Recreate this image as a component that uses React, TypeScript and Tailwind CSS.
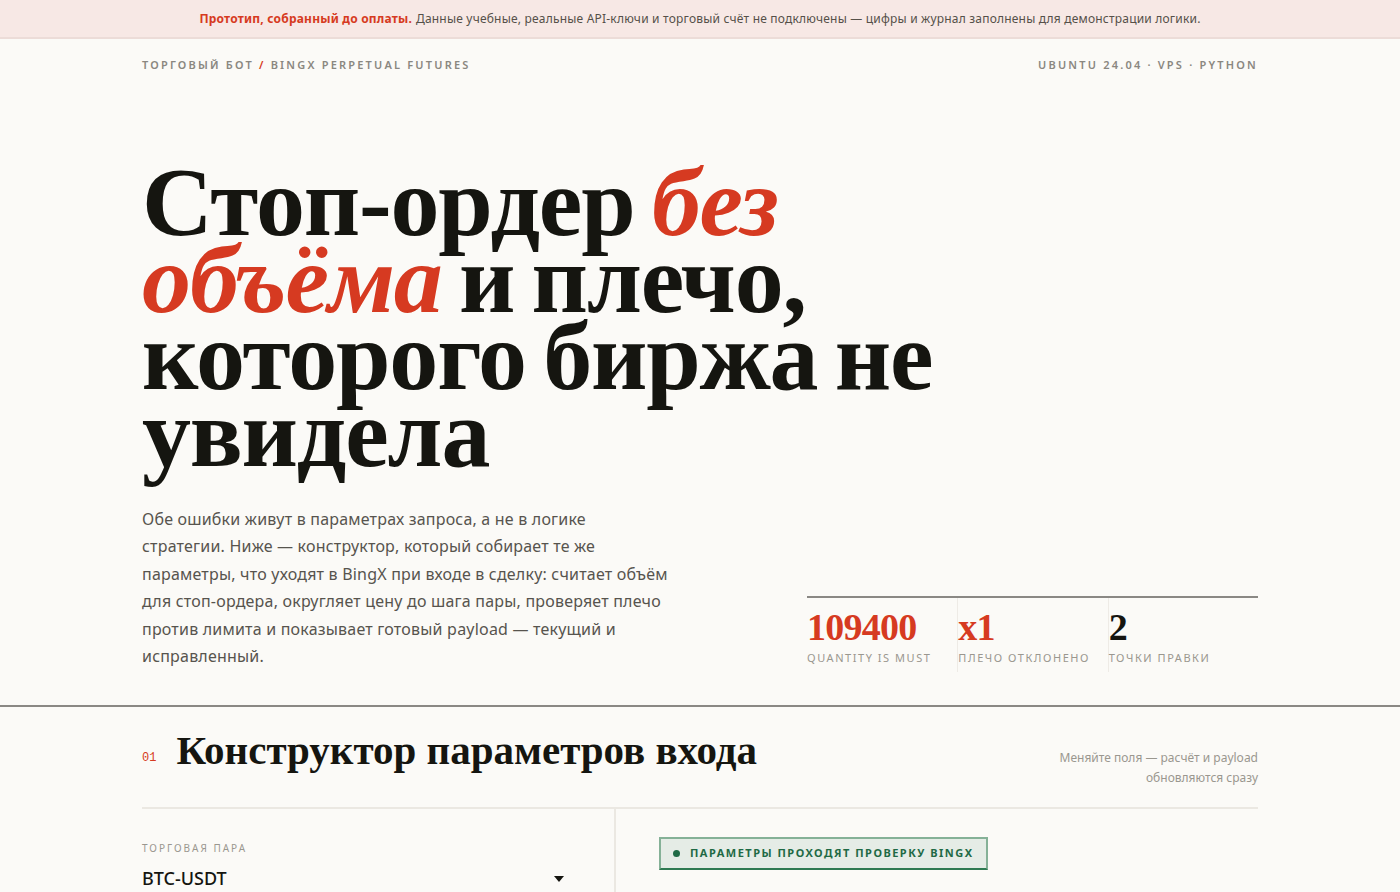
import React from "react";

const serif = "font-['Liberation_Serif','DejaVu_Serif',serif]";
const sans = "font-['Noto_Sans','Open_Sans',sans-serif]";
const mono = "font-['Liberation_Mono','DejaVu_Sans_Mono',monospace]";

const stats = [
  { value: "109400", label: "QUANTITY IS MUST", red: true },
  { value: "x1", label: "ПЛЕЧО ОТКЛОНЕНО", red: true },
  { value: "2", label: "ТОЧКИ ПРАВКИ", red: false },
];

export default function App() {
  return (
    <div className={`min-h-screen bg-[#fbfaf7] text-[#151510] ${sans}`}>
      {/* demo notice */}
      <div className="h-[39px] bg-[#f7e8e5] border-b-2 border-[#ecdcd8] flex items-center justify-center text-[12px] tracking-[0.2px] text-[#555049]">
        <span className="font-bold text-[#d63a21] mr-1">Прототип, собранный до оплаты.</span>
        Данные учебные, реальные API-ключи и торговый счёт не подключены — цифры и журнал заполнены для демонстрации логики.
      </div>

      <div className="mx-auto w-[1116px]">
        <div className="flex justify-between pt-[18px] text-[11px] font-semibold tracking-[0.2em] text-[#8a8780]">
          <span>
            ТОРГОВЫЙ БОТ <span className="text-[#d63a21]">/</span> BINGX PERPETUAL FUTURES
          </span>
          <span>UBUNTU 24.04 · VPS · PYTHON</span>
        </div>

        <h1 className={`${serif} mt-[90px] text-[98px] leading-[77px] font-bold tracking-[-0.012em] [word-spacing:-6px] w-[830px]`}>
          Стоп-ордер <em className="text-[#d63a21]">без объёма</em> и плечо, которого биржа не увидела
        </h1>

        <div className="flex justify-between items-end mt-[34px] pb-[34px]">
          <p className="w-[560px] text-[16px] leading-[27.6px] tracking-[0.2px] text-[#57544e]">
            Обе ошибки живут в параметрах запроса, а не в логике
            <br />
            стратегии. Ниже — конструктор, который собирает те же
            <br />
            параметры, что уходят в BingX при входе в сделку: считает объём
            <br />
            для стоп-ордера, округляет цену до шага пары, проверяет плечо
            <br />
            против лимита и показывает готовый payload — текущий и
            <br />
            исправленный.
          </p>
          <div className="w-[451px] border-t-2 border-[#8a8884] grid grid-cols-3 mb-[-1px]">
            {stats.map((s, i) => (
              <div
                key={s.label}
                className={`pt-[8px] pb-[6px] ${i > 0 ? "border-l border-[#eeebe6]" : ""}`}
              >
                <div
                  className={`${serif} text-[38px] leading-[42px] font-bold tracking-[-0.02em] ${s.red ? "text-[#d63a21]" : "text-[#151510]"}`}
                >
                  {s.value}
                </div>
                <div className="mt-[2px] text-[11px] tracking-[0.14em] text-[#9a978f]">{s.label}</div>
              </div>
            ))}
          </div>
        </div>
      </div>

      <div className="border-t-2 border-[#8a8884]">
        <div className="mx-auto w-[1116px]">
          <div className="flex justify-between items-start pt-[20px] pb-[19px] border-b-2 border-[#ebe8e2]">
            <div className="flex items-center gap-[20px]">
              <span className={`${mono} text-[12px] text-[#d63a21] mt-[16px]`}>01</span>
              <h2 className={`${serif} text-[41px] leading-[46px] font-bold`}>
                Конструктор параметров входа
              </h2>
            </div>
            <div className="text-right text-[12px] leading-[20px] text-[#9a978f] mt-[21px]">
              Меняйте поля — расчёт и payload
              <br />
              обновляются сразу
            </div>
          </div>

          <div className="flex">
            <div className="w-[474px] border-r-2 border-[#ebe8e2] pt-[32px] pr-[46px]">
              <div className="text-[10px] tracking-[0.2em] text-[#9a978f]">ТОРГОВАЯ ПАРА</div>
              <div className="mt-[9px] flex items-center justify-between">
                <span className="text-[18px] font-medium text-[#151510]">BTC-USDT</span>
                <svg width="10" height="6" viewBox="0 0 10 6" className="mr-[4px]">
                  <path d="M0 0h10L5 6z" fill="#151510" />
                </svg>
              </div>
            </div>
            <div className="pl-[43px] pt-[28px]">
              <div className="inline-flex items-center gap-[10px] h-[33px] px-[12px] bg-[#e5ece6] border-2 border-[#85b197] border-b-[#2f7a52] text-[11px] font-bold tracking-[0.135em] text-[#1f6a45]">
                <span className="w-[7px] h-[7px] rounded-full bg-[#1f6a45]" />
                ПАРАМЕТРЫ ПРОХОДЯТ ПРОВЕРКУ BINGX
              </div>
            </div>
          </div>
        </div>
      </div>
    </div>
  );
}
